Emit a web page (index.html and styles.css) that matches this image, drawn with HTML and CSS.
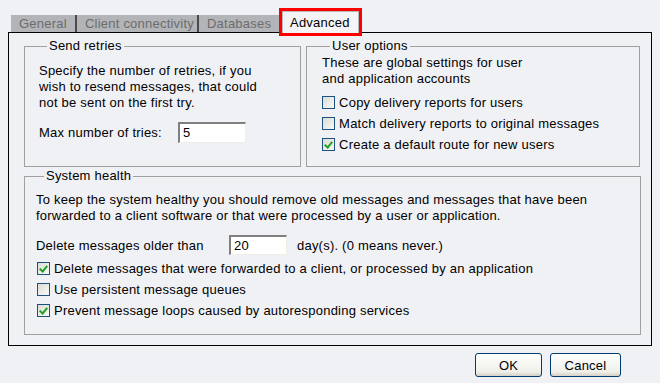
FILE: index.html
```html
<!DOCTYPE html>
<html lang="en">
<head>
  <meta charset="UTF-8" />
  <title>Advanced settings</title>
  <link rel="stylesheet" href="styles.css">
</head>
<body>

<div class="dialog">
  <div class="tabs">
    <div class="tab general">General</div>
    <div class="tab client">Client connectivity</div>
    <div class="tab databases">Databases</div>
    <div class="tab active"><span>Advanced</span></div>
  </div>

  <div class="panel">
    <div class="top-row">
      <fieldset class="group retries">
        <legend>Send retries</legend>
        <p class="desc">Specify the number of retries, if you<br>wish to resend messages, that could<br>not be sent on the first try.</p>
        <div class="field">
          <span class="field-label tries-label">Max number of tries:</span>
          <span class="textbox tries">5</span>
        </div>
      </fieldset>

      <fieldset class="group users">
        <legend>User options</legend>
        <p class="desc">These are global settings for user<br>and application accounts</p>
        <div class="checks">
          <label class="check"><span class="box"></span>Copy delivery reports for users</label>
          <label class="check"><span class="box"></span>Match delivery reports to original messages</label>
          <label class="check"><span class="box checked"></span>Create a default route for new users</label>
        </div>
      </fieldset>
    </div>

    <fieldset class="group health">
      <legend>System health</legend>
      <p class="desc">To keep the system healthy you should remove old messages and messages that have been<br>forwarded to a client software or that were processed by a user or application.</p>
      <div class="field">
        <span class="field-label older-label">Delete messages older than</span>
        <span class="textbox days">20</span>
        <span class="after">day(s). (0 means never.)</span>
      </div>
      <div class="checks">
        <label class="check"><span class="box checked"></span>Delete messages that were forwarded to a client, or processed by an application</label>
        <label class="check"><span class="box"></span>Use persistent message queues</label>
        <label class="check"><span class="box checked"></span>Prevent message loops caused by autoresponding services</label>
      </div>
    </fieldset>
  </div>

  <div class="buttons">
    <button class="btn ok">OK</button>
    <button class="btn cancel">Cancel</button>
  </div>
</div>

</body>
</html>
```

FILE: styles.css
```css
body {
  margin: 0;
  background: #f0f1f5;
  font-family: 'Liberation Sans', Arial, sans-serif;
  font-size: 13px;
  letter-spacing: 0.22px;
  color: #000;
}
.dialog {
  padding: 0 8px;
}
.tabs {
  display: flex;
  align-items: flex-end;
  height: 32px;
  padding-left: 3px;
}
.tab {
  box-sizing: border-box;
  height: 17px;
  line-height: 17px;
  padding: 0 0 0 8px;
  background: #b3b4b8;
  color: #6c6c6c;
  white-space: nowrap;
}
.general {
  width: 66px;
  border-right: 2px solid #4a4a4a;
}
.client {
  width: 122px;
  border-right: 2px solid #4a4a4a;
}
.databases {
  width: 80px;
}
.tab.active {
  position: relative;
  z-index: 1;
  width: 83px;
  height: 28px;
  margin-bottom: -4px;
  padding: 0;
  background: none;
  border: 3px solid #f00;
}
.tab.active span {
  display: block;
  height: 21px;
  padding-left: 7px;
  line-height: 22px;
  color: #000;
  background: #f4f4f6;
  border: 1px solid #b8b8b8;
  border-bottom: none;
}
.panel {
  box-sizing: border-box;
  height: 314px;
  border: 1px solid #000;
  padding: 5px 11px 0 15px;
}
.top-row {
  display: flex;
  gap: 5px;
}
.group {
  margin: 0;
  border: 1px solid #a0a0a0;
  padding: 0;
  box-sizing: border-box;
}
.group legend {
  margin-left: 8px;
  padding: 0 2px;
  line-height: 16px;
}
.desc {
  margin: 0;
  line-height: 16px;
}
.retries {
  width: 278px;
  height: 129px;
  padding: 9px 0 0 14px;
}
.users {
  width: 335px;
  height: 129px;
  padding: 1px 0 0 15px;
}
.health {
  width: 617px;
  height: 167px;
  margin-top: 1px;
  padding: 8px 0 0 11px;
}
.field {
  display: flex;
  align-items: center;
  margin-top: 11px;
}
.tries-label {
  width: 139px;
}
.older-label {
  width: 193px;
}
.textbox {
  box-sizing: border-box;
  height: 21px;
  line-height: 18px;
  padding-left: 3px;
  background: #fff;
  border-top: 2px solid #808080;
  border-left: 2px solid #808080;
  border-right: 1px solid #eeeee4;
  border-bottom: 1px solid #eeeee4;
}
.tries {
  width: 68px;
}
.days {
  width: 58px;
  height: 20px;
}
.after {
  margin-left: 10px;
}
.checks {
  display: flex;
  flex-direction: column;
}
.users .checks {
  margin-top: 5px;
}
.health .checks {
  margin-top: 3px;
  margin-left: 1px;
}
.check {
  display: flex;
  align-items: center;
  height: 21px;
}
.box {
  position: relative;
  width: 13px;
  height: 13px;
  box-sizing: border-box;
  border: 1px solid #1c5180;
  background: linear-gradient(135deg, #dcdcd6, #f8f8f6);
  margin-right: 4px;
}
.box.checked::after {
  content: "";
  position: absolute;
  left: 3px;
  top: 1px;
  width: 3px;
  height: 6px;
  border: solid #21a121;
  border-width: 0 2px 2px 0;
  transform: rotate(40deg);
}
.buttons {
  display: flex;
  justify-content: flex-end;
  gap: 8px;
  margin-top: 7px;
  padding-right: 31px;
}
.btn {
  height: 24px;
  font-family: 'Liberation Sans', Arial, sans-serif;
  font-size: 13px;
  letter-spacing: 0.22px;
  color: #000;
  border: 1px solid #003c74;
  border-radius: 3px;
  background: linear-gradient(#ffffff, #f0f0ea 80%, #d6d0c5);
  padding: 0;
}
.ok {
  width: 67px;
}
.cancel {
  width: 71px;
}
```
